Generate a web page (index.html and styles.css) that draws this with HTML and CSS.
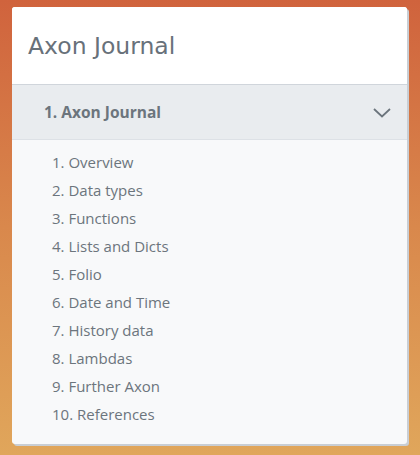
FILE: index.html
```html
<!DOCTYPE html>
<html>
<head>
<meta charset="utf-8">
<link rel="stylesheet" href="styles.css">
</head>
<body>
<div class="card">
  <div class="card-header"><h1 class="title">Axon Journal</h1></div>
  <div class="acc-btn">
    <span class="acc-label">1. Axon Journal</span>
    <svg class="chev" width="18" height="10" viewBox="0 0 18 10"><path d="M1 1 L9 8.5 L17 1" fill="none" stroke="#6c757d" stroke-width="1.8"/></svg>
  </div>
  <ol class="toc">
    <li>1. Overview</li>
    <li>2. Data types</li>
    <li>3. Functions</li>
    <li>4. Lists and Dicts</li>
    <li>5. Folio</li>
    <li>6. Date and Time</li>
    <li>7. History data</li>
    <li>8. Lambdas</li>
    <li>9. Further Axon</li>
    <li>10. References</li>
  </ol>
</div>
</body>
</html>
```

FILE: styles.css
```css
html, body {
  margin: 0;
  height: 100%;
}
body {
  background: linear-gradient(to bottom, #d0633d 0%, #d9884c 50%, #e0a65b 100%);
  padding: 7px 13px 0 12px;
  box-sizing: border-box;
  font-family: "Open Sans", sans-serif;
}
.card {
  background: #f8f9fa;
  border-radius: 3px;
  box-shadow: 2px 2px 0 #c9ced4;
  height: 437px;
  overflow: hidden;
}
.card-header {
  background: #fff;
  height: 77px;
  border-bottom: 1px solid #d0d5db;
  display: flex;
  align-items: center;
  padding-left: 16px;
}
.title {
  margin: 0;
  font-family: "DejaVu Sans", sans-serif;
  font-weight: normal;
  font-size: 23.5px;
  color: #68717a;
  letter-spacing: 0;
  padding-top: 1px;
}
.acc-btn {
  background: #e9ecef;
  height: 54px;
  border-bottom: 1px solid #dde1e6;
  display: flex;
  align-items: center;
  justify-content: space-between;
  padding: 0 16px 0 32px;
}
.acc-label {
  font-weight: bold;
  font-size: 15.5px;
  color: #6c757d;
}
.chev { display: block; margin-top: 1px; }
.toc {
  list-style: none;
  margin: 0;
  padding: 8px 0 0 40px;
}
.toc li {
  font-size: 15px;
  line-height: 28px;
  color: #6c757d;
}
```
